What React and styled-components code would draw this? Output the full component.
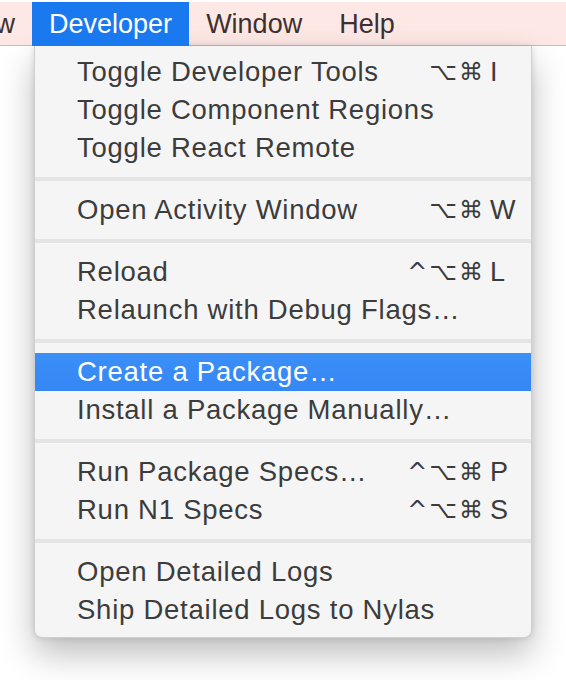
import React from 'react'
import styled, { createGlobalStyle } from 'styled-components'

const GlobalStyle = createGlobalStyle`
  html, body {
    margin: 0;
    padding: 0;
    background: #ffffff;
  }
  body {
    font-family: "Liberation Sans", Arial, "DejaVu Sans", sans-serif;
  }
`

const Screen = styled.div`
  width: 566px;
  height: 680px;
  overflow: hidden;
  background: #ffffff;
  padding-top: 2px;
  box-sizing: border-box;
`

const MenuBar = styled.div`
  display: flex;
  height: 44px;
  margin-left: -60px;
  background: #fde8e6;
  border-bottom: 1px solid #cdbab8;
  box-sizing: border-box;
`

const BarItem = styled.div`
  display: flex;
  align-items: center;
  padding: 0 17px;
  margin-right: ${p => (p.$wide ? '3px' : '0')};
  font-size: 27px;
  color: ${p => (p.$active ? '#ffffff' : '#3f302e')};
  background: ${p => (p.$active ? '#1b79f0' : 'transparent')};
  height: 44px;
`

const Panel = styled.div`
  margin-left: 34px;
  width: 498px;
  background: #f5f5f5;
  border: 1px solid #cfcfcf;
  border-top: none;
  border-radius: 0 0 8px 8px;
  box-sizing: border-box;
  padding: 7px 0 8px;
  box-shadow: 0 16px 34px rgba(0, 0, 0, 0.26), 0 0 6px rgba(0, 0, 0, 0.12);
`

const Row = styled.div`
  display: grid;
  grid-template-columns: 1fr 90px 43px;
  align-items: center;
  height: 38px;
  padding-left: 42px;
  font-size: 27.5px;
  color: ${p => (p.$selected ? '#ffffff' : '#3c3c3c')};
  background: ${p => (p.$selected ? 'linear-gradient(#3b8ff7, #3587f4)' : 'transparent')};
`

const Label = styled.span`
  white-space: nowrap;
  letter-spacing: 0.75px;
`

const Mods = styled.span`
  text-align: right;
  white-space: nowrap;
  padding-right: 3px;
  font-family: "DejaVu Sans", sans-serif;
  font-size: 24px;
  letter-spacing: 2px;
`

const Key = styled.span`
  padding-left: 2px;
  font-size: 27px;
`

const Separator = styled.div`
  height: 4px;
  background: #e4e4e4;
  margin: 10px 0;
`

const groups = [
  [
    { label: 'Toggle Developer Tools', mods: '⌥⌘', key: 'I' },
    { label: 'Toggle Component Regions' },
    { label: 'Toggle React Remote' },
  ],
  [{ label: 'Open Activity Window', mods: '⌥⌘', key: 'W' }],
  [
    { label: 'Reload', mods: '^⌥⌘', key: 'L' },
    { label: 'Relaunch with Debug Flags…' },
  ],
  [
    { label: 'Create a Package…', selected: true },
    { label: 'Install a Package Manually…' },
  ],
  [
    { label: 'Run Package Specs…', mods: '^⌥⌘', key: 'P' },
    { label: 'Run N1 Specs', mods: '^⌥⌘', key: 'S' },
  ],
  [
    { label: 'Open Detailed Logs' },
    { label: 'Ship Detailed Logs to Nylas' },
  ],
]

export default function App() {
  return (
    <Screen>
      <GlobalStyle />
      <MenuBar>
        <BarItem>View</BarItem>
        <BarItem $active>Developer</BarItem>
        <BarItem $wide>Window</BarItem>
        <BarItem>Help</BarItem>
      </MenuBar>
      <Panel>
        {groups.map((group, gi) => (
          <React.Fragment key={gi}>
            {gi > 0 && <Separator />}
            {group.map(item => (
              <Row key={item.label} $selected={item.selected}>
                <Label>{item.label}</Label>
                <Mods>{item.mods}</Mods>
                <Key>{item.key}</Key>
              </Row>
            ))}
          </React.Fragment>
        ))}
      </Panel>
    </Screen>
  )
}
